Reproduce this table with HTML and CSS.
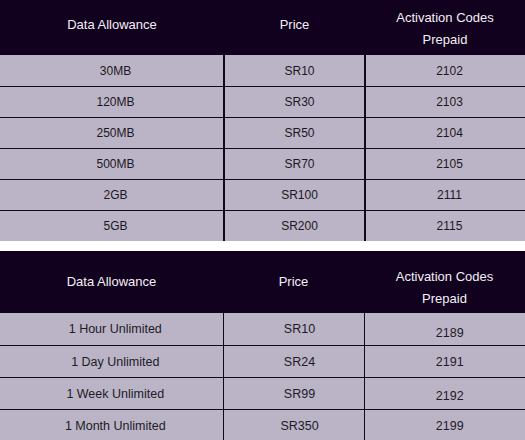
FILE: index.html
```html
<!DOCTYPE html>
<html>
<head>
<meta charset="utf-8">
<link rel="stylesheet" href="styles.css">
</head>
<body>
<div class="page">
  <table class="plans plans-a">
    <colgroup><col class="c1"><col class="c2"><col class="c3"></colgroup>
    <thead>
      <tr>
        <th class="col-data">Data Allowance</th>
        <th class="col-price">Price</th>
        <th class="col-code">Activation Codes<br>Prepaid</th>
      </tr>
    </thead>
    <tbody>
      <tr><td class="col-data">30MB</td><td class="col-price">SR10</td><td class="col-code">2102</td></tr>
      <tr><td class="col-data">120MB</td><td class="col-price">SR30</td><td class="col-code">2103</td></tr>
      <tr><td class="col-data">250MB</td><td class="col-price">SR50</td><td class="col-code">2104</td></tr>
      <tr><td class="col-data">500MB</td><td class="col-price">SR70</td><td class="col-code">2105</td></tr>
      <tr><td class="col-data">2GB</td><td class="col-price">SR100</td><td class="col-code">2111</td></tr>
      <tr><td class="col-data">5GB</td><td class="col-price">SR200</td><td class="col-code">2115</td></tr>
    </tbody>
  </table>

  <table class="plans plans-b">
    <colgroup><col class="d1"><col class="d2"><col class="d3"></colgroup>
    <thead>
      <tr>
        <th class="col-data">Data Allowance</th>
        <th class="col-price">Price</th>
        <th class="col-code">Activation Codes<br>Prepaid</th>
      </tr>
    </thead>
    <tbody>
      <tr><td class="col-data">1 Hour Unlimited</td><td class="col-price">SR10</td><td class="col-code low">2189</td></tr>
      <tr><td class="col-data">1 Day Unlimited</td><td class="col-price">SR24</td><td class="col-code">2191</td></tr>
      <tr><td class="col-data">1 Week Unlimited</td><td class="col-price">SR99</td><td class="col-code lower">2192</td></tr>
      <tr><td class="col-data">1 Month Unlimited</td><td class="col-price">SR350</td><td class="col-code">2199</td></tr>
    </tbody>
  </table>
</div>
</body>
</html>
```

FILE: styles.css
```css
html, body {
  margin: 0;
  padding: 0;
  background: #ffffff;
}

.page {
  width: 525px;
  display: flex;
  flex-direction: column;
  gap: 10px;
  font-family: "Liberation Sans", Arial, sans-serif;
}

.plans {
  width: 525px;
  border-collapse: collapse;
  table-layout: fixed;
}

.c1 { width: 224px; }
.c2 { width: 141px; }
.c3 { width: 160px; }

.d1 { width: 223px; }
.d2 { width: 141px; }
.d3 { width: 161px; }

.plans th {
  background: #12001f;
  color: #f2f0f4;
  font-size: 13px;
  font-weight: normal;
  line-height: 22px;
  text-align: center;
  vertical-align: middle;
  padding: 0;
}

/* first table header: 55px tall */
.plans-a th.col-data,
.plans-a th.col-price { height: 50px; padding-bottom: 5px; }
.plans-a th.col-code { height: 52px; padding-top: 3px; }

/* second table header: 62px tall */
.plans-b th.col-data,
.plans-b th.col-price { height: 62px; }
.plans-b th.col-code { height: 51px; padding-top: 11px; }

.plans td {
  background: #bbb4c6;
  color: #1c1822;
  font-size: 12px;
  text-align: center;
  vertical-align: middle;
  padding: 0;
  border-top: 1px solid #0f0a1a;
  border-left: 2px solid #0f0a1a;
}

.plans td:first-child { border-left: none; }

.plans-a td { height: 30px; }
.plans-a tbody tr:first-child td { height: 31px; border-top: none; }

.plans-b td { height: 31px; border-left-width: 1px; font-size: 12.5px; color: #201b28; }
.plans-b td:first-child { border-left: none; }
.plans-b tbody tr:first-child td { height: 32px; border-top: none; }

.plans td.col-data { padding-left: 8px; }
.plans td.col-price { padding-left: 10px; }
.plans td.col-code { padding-left: 8px; }

.plans-b td.col-price { padding-left: 12px; }
.plans-b td.col-code { padding-left: 10px; }

.plans-b tbody tr:first-child td.low { height: 24px; padding-top: 8px; }
.plans-b td.lower { height: 27px; padding-top: 4px; }
```
